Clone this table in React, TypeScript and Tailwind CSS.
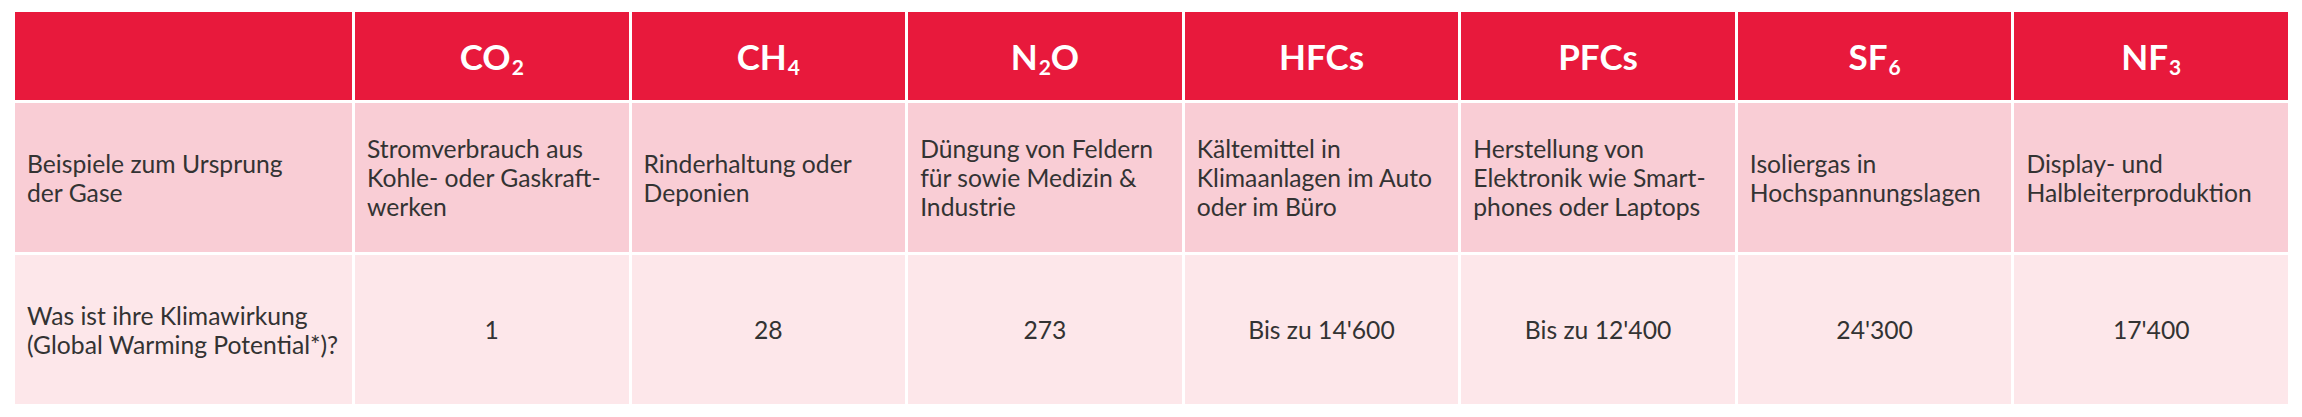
import React from 'react';

type Gas = {
  base: string;
  sub?: string;
  tail?: string;
  origin: string[];
  gwp: string;
};

const gases: Gas[] = [
  { base: 'CO', sub: '2', origin: ['Stromverbrauch aus', 'Kohle- oder Gaskraft-', 'werken'], gwp: '1' },
  { base: 'CH', sub: '4', origin: ['Rinderhaltung oder', 'Deponien'], gwp: '28' },
  { base: 'N', sub: '2', tail: 'O', origin: ['Düngung von Feldern', 'für sowie Medizin &', 'Industrie'], gwp: '273' },
  { base: 'HFCs', origin: ['Kältemittel in', 'Klimaanlagen im Auto', 'oder im Büro'], gwp: "Bis zu 14'600" },
  { base: 'PFCs', origin: ['Herstellung von', 'Elektronik wie Smart-', 'phones oder Laptops'], gwp: "Bis zu 12'400" },
  { base: 'SF', sub: '6', origin: ['Isoliergas in', 'Hochspannungslagen'], gwp: "24'300" },
  { base: 'NF', sub: '3', origin: ['Display- und', 'Halbleiterproduktion'], gwp: "17'400" },
];

const Lines: React.FC<{ lines: string[] }> = ({ lines }) => (
  <p>
    {lines.map((l, i) => (
      <React.Fragment key={i}>
        {l}
        {i < lines.length - 1 && <br />}
      </React.Fragment>
    ))}
  </p>
);

const Formula: React.FC<{ gas: Gas }> = ({ gas }) => (
  <span>
    {gas.base}
    {gas.sub && <sub className="text-[21px] relative top-[5px] align-baseline ml-[1px]">{gas.sub}</sub>}
    {gas.tail}
  </span>
);

export default function App() {
  return (
    <div className="bg-white w-[2302px] h-[417px] pt-[12px] pl-[15px] font-['Lato',sans-serif]">
      <div className="w-[2273px] grid grid-cols-[337px_repeat(7,1fr)] grid-rows-[88px_149px_149px] gap-[3px] text-[24.7px] leading-[29px] text-[#333333]">
        {/* header */}
        <div className="bg-[#e8193c]" />
        {gases.map(g => (
          <div key={g.base} className="bg-[#e8193c] flex items-center justify-center text-white font-bold text-[35px] leading-none">
            <Formula gas={g} />
          </div>
        ))}

        {/* origin row */}
        <div className="bg-[#f9cdd5] flex items-center px-[12px]">
          <Lines lines={['Beispiele zum Ursprung', 'der Gase']} />
        </div>
        {gases.map(g => (
          <div key={g.base} className="bg-[#f9cdd5] flex items-center px-[12px]">
            <Lines lines={g.origin} />
          </div>
        ))}

        {/* gwp row */}
        <div className="bg-[#fde7ea] flex items-center px-[12px]">
          <Lines lines={['Was ist ihre Klimawirkung', '(Global Warming Potential*)?']} />
        </div>
        {gases.map(g => (
          <div key={g.base} className="bg-[#fde7ea] flex items-center justify-center px-[12px]">
            <span>{g.gwp}</span>
          </div>
        ))}
      </div>
    </div>
  );
}
